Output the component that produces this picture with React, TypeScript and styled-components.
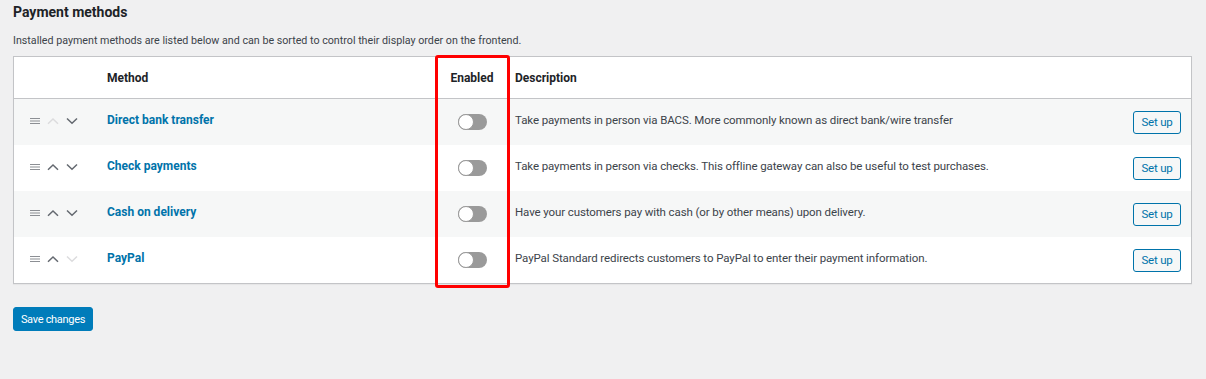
import React from "react";
import styled, { createGlobalStyle } from "styled-components";

const GlobalStyle = createGlobalStyle`
  html, body {
    margin: 0;
    background: #f0f0f1;
  }
  body {
    font-family: Roboto, "Noto Sans", sans-serif;
    color: #3c434a;
  }
`;

const Page = styled.div`
  padding: 3px 14px 0 13px;
  height: 379px;
  box-sizing: border-box;
`;
const Title = styled.h2`
  margin: 0;
  font-size: 14px;
  font-weight: 700;
  line-height: 18px;
  color: #1d2327;
`;
const Intro = styled.p`
  margin: 12px 0 0;
  font-size: 10.7px;
  line-height: 16px;
`;
const TableWrap = styled.div`
  position: relative;
  margin-top: 7px;
  background: #fff;
  border: 1px solid #c3c4c7;
  box-shadow: 0 1px 1px rgba(0, 0, 0, 0.04);
`;
const Highlight = styled.div`
  position: absolute;
  left: 421px;
  top: -2px;
  width: 75px;
  height: 233px;
  box-sizing: border-box;
  border: 3px solid #ff0000;
  border-radius: 3px;
  pointer-events: none;
`;
const Row = styled.div<{ $header?: boolean; $alt?: boolean }>`
  display: grid;
  grid-template-columns: 81px 342px 70px 1fr 80px;
  align-items: center;
  height: ${(p) => (p.$header ? "41px" : "46px")};
  background: ${(p) => (p.$alt ? "#f6f7f7" : "#fff")};
  border-bottom: ${(p) => (p.$header ? "1px solid #c3c4c7" : "none")};
`;
const HeadCell = styled.div<{ $center?: boolean; $pad?: number }>`
  font-size: 12px;
  font-weight: 700;
  color: #1d2327;
  text-align: ${(p) => (p.$center ? "center" : "left")};
  padding-left: ${(p) => p.$pad ?? 0}px;
`;
const Sort = styled.div`
  display: flex;
  align-items: center;
  gap: 7px;
  padding-left: 16px;
  margin-top: -2px;
`;
const MethodLink = styled.a`
  font-size: 12px;
  font-weight: 700;
  color: #0073aa;
  text-decoration: none;
  padding-left: 12px;
  margin-top: -4px;
`;
const ToggleCell = styled.div`
  display: flex;
  justify-content: center;
`;
const Toggle = styled.span`
  position: relative;
  display: inline-block;
  width: 29px;
  height: 16px;
  border-radius: 8px;
  background: #9a9a9a;
  &::after {
    content: "";
    position: absolute;
    left: 0;
    top: 0;
    width: 14px;
    height: 14px;
    border-radius: 50%;
    background: #fff;
    border: 1px solid #9a9a9a;
  }
`;
const Desc = styled.div`
  font-size: 11.5px;
  letter-spacing: -0.1px;
  padding-left: 8px;
  margin-top: -4px;
  color: #3c434a;
`;
const ActionCell = styled.div`
  display: flex;
  justify-content: flex-end;
  padding-right: 10px;
`;
const SetUp = styled.button`
  font-family: inherit;
  font-size: 11.5px;
  letter-spacing: -0.2px;
  color: #0073aa;
  background: #f6f7f7;
  border: 1px solid #0073aa;
  border-radius: 3px;
  width: 48px;
  height: 23px;
  padding: 0;
`;
const Save = styled.button`
  margin-top: 23px;
  font-family: inherit;
  font-size: 11px;
  letter-spacing: -0.3px;
  color: #fff;
  background: #007cba;
  border: 1px solid #007cba;
  border-radius: 3px;
  width: 80px;
  height: 24px;
  padding: 0;
`;

const Handle = () => (
  <svg width="10" height="8" viewBox="0 0 10 8">
    <path d="M0 1.5h10M0 4h10M0 6.5h10" stroke="#8c8f94" strokeWidth="1.1" />
  </svg>
);
const Chevron = ({ up, off }: { up?: boolean; off?: boolean }) => (
  <svg width="12" height="8" viewBox="0 0 12 8">
    <path
      d={up ? "M1 6.8l5-4.8 5 4.8" : "M1 1.5l5 4.8 5-4.8"}
      fill="none"
      stroke={off ? "#dcdcde" : "#646970"}
      strokeWidth="1.5"
    />
  </svg>
);

const methods = [
  {
    name: "Direct bank transfer",
    desc: "Take payments in person via BACS. More commonly known as direct bank/wire transfer",
    upOff: true,
  },
  {
    name: "Check payments",
    desc: "Take payments in person via checks. This offline gateway can also be useful to test purchases.",
  },
  {
    name: "Cash on delivery",
    desc: "Have your customers pay with cash (or by other means) upon delivery.",
  },
  {
    name: "PayPal",
    desc: "PayPal Standard redirects customers to PayPal to enter their payment information.",
    downOff: true,
  },
];

export default function App() {
  return (
    <Page>
      <GlobalStyle />
      <Title>Payment methods</Title>
      <Intro>
        Installed payment methods are listed below and can be sorted to control
        their display order on the frontend.
      </Intro>
      <TableWrap>
        <Row $header>
          <HeadCell />
          <HeadCell $pad={12}>Method</HeadCell>
          <HeadCell $center>Enabled</HeadCell>
          <HeadCell $pad={8}>Description</HeadCell>
          <HeadCell />
        </Row>
        {methods.map((m, i) => (
          <Row key={m.name} $alt={i % 2 === 0}>
            <Sort>
              <Handle />
              <Chevron up off={m.upOff} />
              <Chevron off={m.downOff} />
            </Sort>
            <MethodLink href="#">{m.name}</MethodLink>
            <ToggleCell>
              <Toggle />
            </ToggleCell>
            <Desc>{m.desc}</Desc>
            <ActionCell>
              <SetUp>Set up</SetUp>
            </ActionCell>
          </Row>
        ))}
        <Highlight />
      </TableWrap>
      <Save>Save changes</Save>
    </Page>
  );
}
